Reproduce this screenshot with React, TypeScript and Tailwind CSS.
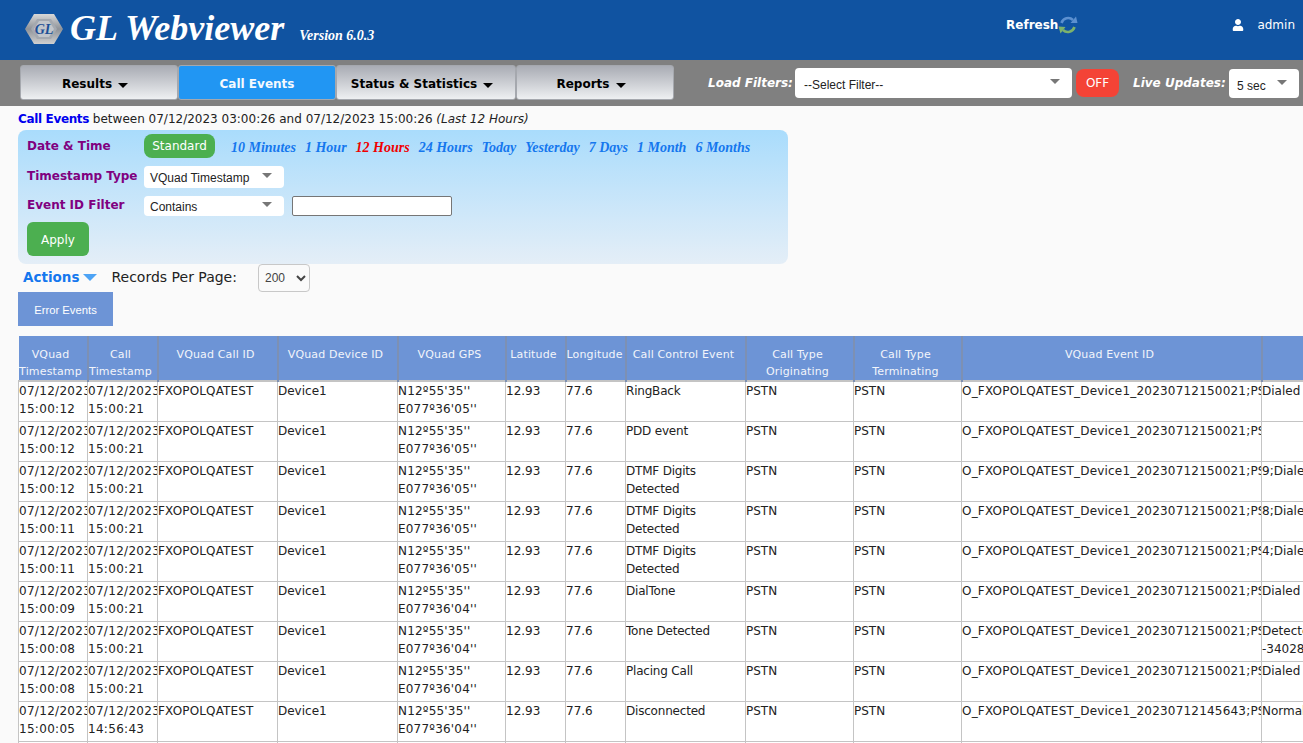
import { FaUser } from "react-icons/fa";

const cols = [69, 70, 120, 120, 108, 60, 60, 120, 108, 108, 300, 200];

const headers = [
  ["VQuad", "Timestamp"],
  ["Call", "Timestamp"],
  ["VQuad Call ID"],
  ["VQuad Device ID"],
  ["VQuad GPS"],
  ["Latitude"],
  ["Longitude"],
  ["Call Control Event"],
  ["Call Type", "Originating"],
  ["Call Type", "Terminating"],
  ["VQuad Event ID"],
  [""],
];

const rows = [
  { ts: "15:00:12", call: "15:00:21", lon: "E077º36'05''", ev: ["RingBack"], id: "20230712150021", last: ["Dialed"] },
  { ts: "15:00:12", call: "15:00:21", lon: "E077º36'05''", ev: ["PDD event"], id: "20230712150021", last: [""] },
  { ts: "15:00:12", call: "15:00:21", lon: "E077º36'05''", ev: ["DTMF Digits", "Detected"], id: "20230712150021", last: ["9;Dialed"] },
  { ts: "15:00:11", call: "15:00:21", lon: "E077º36'05''", ev: ["DTMF Digits", "Detected"], id: "20230712150021", last: ["8;Dialed"] },
  { ts: "15:00:11", call: "15:00:21", lon: "E077º36'05''", ev: ["DTMF Digits", "Detected"], id: "20230712150021", last: ["4;Dialed"] },
  { ts: "15:00:09", call: "15:00:21", lon: "E077º36'04''", ev: ["DialTone"], id: "20230712150021", last: ["Dialed"] },
  { ts: "15:00:08", call: "15:00:21", lon: "E077º36'04''", ev: ["Tone Detected"], id: "20230712150021", last: ["Detected", "-34028"] },
  { ts: "15:00:08", call: "15:00:21", lon: "E077º36'04''", ev: ["Placing Call"], id: "20230712150021", last: ["Dialed"] },
  { ts: "15:00:05", call: "14:56:43", lon: "E077º36'04''", ev: ["Disconnected"], id: "20230712145643", last: ["Normal"] },
  { ts: "15:00:05", call: "14:56:43", lon: "E077º36'04''", ev: ["Disconnected"], id: "20230712145643", last: ["Normal"] },
];

// digits in the source font run a bit wider than DejaVu
const cellTracking = [
  "tracking-[0.3px]",
  "tracking-[0.3px]",
  "tracking-[0.15px]",
  "",
  "tracking-[0.2px]",
  "",
  "",
  "tracking-[-0.2px]",
  "",
  "",
  "tracking-[0.2px]",
  "",
];

const ranges = ["10 Minutes", "1 Hour", "12 Hours", "24 Hours", "Today", "Yesterday", "7 Days", "1 Month", "6 Months"];

function Caret() {
  return <span className="inline-block ml-[6px] mt-[3px] border-x-[5px] border-t-[5px] border-x-transparent border-t-black" />;
}

function Tab({ label, active, width, caret = true }: { label: string; active?: boolean; width: string; caret?: boolean }) {
  return (
    <div
      className={`${width} shrink-0 h-[35px] flex items-center justify-center pt-[2px] rounded-[3px] text-[12px] font-bold border border-[#a5a8ae] ${
        caret ? "pr-[8px]" : ""
      } ${
        active
          ? "bg-[#2196f3] text-[#f4f9fe] border-[#2a8ad8]"
          : "bg-gradient-to-b from-[#a9acb4] to-[#eef0f2] text-black"
      }`}
    >
      {label}
      {caret && <Caret />}
    </div>
  );
}

function PickBox({ label, size, inset = "pl-[6px]", labelPad = "pt-[2px]" }: { label: string; size: string; inset?: string; labelPad?: string }) {
  return (
    <div className={`${size} ${inset} shrink-0 rounded-[4px] bg-white flex items-center justify-between pr-[12px] text-[12px] text-[#222] font-['Liberation_Sans',sans-serif]`}>
      <span className={labelPad}>{label}</span>
      <span className="mb-[3px] border-x-[5px] border-t-[5px] border-x-transparent border-t-[#777]" />
    </div>
  );
}

function Logo() {
  return (
    <svg width="40" height="32" viewBox="0 0 40 32" className="shrink-0">
      <defs>
        <linearGradient id="hex" x1="0" y1="0" x2="0" y2="1">
          <stop offset="0" stopColor="#d8d8d8" />
          <stop offset="0.5" stopColor="#8e9298" />
          <stop offset="1" stopColor="#d0d0d0" />
        </linearGradient>
      </defs>
      <polygon points="1,16 10,1 30,1 39,16 30,31 10,31" fill="url(#hex)" />
      <polygon points="7,16 13,6 27,6 33,16 27,26 13,26" fill="#a4a9b0" />
      <polygon points="10,16 15,8 25,8 30,16 25,24 15,24" fill="#c2c6cb" />
      <text x="20" y="21" textAnchor="middle" className="font-['Liberation_Serif',serif] font-bold italic text-[14px] fill-[#1c4f96]">
        GL
      </text>
    </svg>
  );
}

function RefreshIcon() {
  return (
    <svg width="20" height="20" viewBox="0 0 20 20" className="shrink-0" fill="none" strokeWidth="2.6">
      <path d="M3.5 8 A7 7 0 0 1 15 5" stroke="#5c90d0" />
      <polygon points="12.5,8 19.5,8 18,1.5" fill="#5c90d0" />
      <path d="M16.5 12 A7 7 0 0 1 5 15" stroke="#7cb26c" />
      <polygon points="0.5,11.5 7.5,12 2.5,18.5" fill="#7cb26c" />
    </svg>
  );
}

export default function App() {
  return (
    <div className="h-[743px] w-[1303px] overflow-hidden bg-[#fafafa] font-['DejaVu_Sans',Verdana,sans-serif] text-[#222]">
      <header className="h-[60px] bg-[#1053a1] flex items-start text-white">
        <div className="flex items-center ml-[24px] mt-[12px]">
          <Logo />
          <span className="ml-[6px] mb-[2px] font-['Liberation_Serif',serif] font-bold italic text-[36px] leading-[32px]">GL Webviewer</span>
          <span className="ml-[15px] mt-[12px] font-['Liberation_Serif',serif] font-bold italic text-[14px]">Version 6.0.3</span>
        </div>
        <div className="ml-auto flex items-center mt-[15px] mr-[154px] text-[12px] font-bold">
          Refresh
          <RefreshIcon />
        </div>
        <div className="flex items-center mt-[16px] mr-[8px] text-[12px]">
          <FaUser className="w-[12px] h-[12px] mr-[13px]" />
          admin
        </div>
      </header>

      <nav className="h-[46px] bg-[#808080] flex items-start pl-[20px] pt-[5px]">
        <Tab label="Results" width="w-[158px]" />
        <Tab label="Call Events" active width="w-[158px]" caret={false} />
        <Tab label="Status & Statistics" width="w-[180px]" />
        <Tab label="Reports" width="w-[158px]" />
        <span className="ml-[34px] w-[87px] shrink-0 mt-[10px] text-[12px] font-bold italic text-white leading-[16px] whitespace-nowrap">Load Filters:</span>
        <div className="mt-[3px]">
          <PickBox label="--Select Filter--" size="w-[277px] h-[30px]" inset="pl-[9px]" labelPad="pt-[4px]" />
        </div>
        <div className="ml-[4px] mt-[4px] w-[43px] h-[28px] shrink-0 rounded-[8px] bg-[#f44336] text-white text-[12px] flex items-center justify-center">OFF</div>
        <span className="ml-[14px] w-[96px] shrink-0 mt-[10px] text-[12px] font-bold italic text-white leading-[16px] whitespace-nowrap">Live Updates:</span>
        <div className="mt-[4px]">
          <PickBox label="5 sec" size="w-[70px] h-[29px]" inset="pl-[8px]" labelPad="pt-[4px]" />
        </div>
      </nav>

      <main className="pl-[18px]">
        <p className="h-[24px] pt-[4px] text-[12px] leading-[18px]">
          <b className="text-[#0000ee] tracking-[-0.35px]">Call Events</b> between 07/12/2023 03:00:26 and 07/12/2023 15:00:26 <i>(Last 12 Hours)</i>
        </p>

        <section className="w-[770px] h-[134px] rounded-[8px] bg-gradient-to-b from-[#a9dcfc] to-[#e4eef7] pl-[9px] pt-[4px]">
          <div className="flex items-start h-[32px]">
            <span className="w-[117px] pt-[3px] text-[12px] font-bold text-[#800080]">Date & Time</span>
            <span className="w-[71px] h-[24px] rounded-[8px] bg-[#4caf50] text-white text-[12px] flex items-center justify-center">Standard</span>
            <div className="ml-[16px] flex gap-[9px] pt-[5px] font-['Liberation_Serif',serif] italic text-[14px] leading-[18px] font-bold text-[#1577ee]">
              {ranges.map((r) => (
                <span key={r} className={r === "12 Hours" ? "text-[#f00000]" : ""}>
                  {r}
                </span>
              ))}
            </div>
          </div>
          <div className="flex items-center h-[22px]">
            <span className="w-[117px] pb-[2px] text-[12px] font-bold text-[#800080]">Timestamp Type</span>
            <PickBox label="VQuad Timestamp" size="w-[140px] h-[22px]" />
          </div>
          <div className="flex items-center h-[20px] mt-[8px]">
            <span className="w-[117px] pb-[2px] text-[12px] font-bold text-[#800080]">Event ID Filter</span>
            <PickBox label="Contains" size="w-[140px] h-[20px]" />
            <input className="ml-[8px] w-[160px] h-[20px] bg-white border border-[#767676] rounded-[2px]" />
          </div>
          <button className="mt-[6px] w-[62px] h-[34px] pt-[2px] rounded-[6px] bg-[#4caf50] text-white text-[12px]">Apply</button>
        </section>

        <div className="h-[28px] flex items-center">
          <span className="ml-[5px] mb-[2px] text-[13.5px] font-bold text-[#1577ee]">Actions</span>
          <span className="ml-[4px] mb-[2px] border-x-[7px] border-t-[7px] border-x-transparent border-t-[#4da3f5]" />
          <span className="ml-[14px] mb-[2px] text-[14px]">Records Per Page:</span>
          <select className="ml-[21px] w-[52px] h-[28px] text-[12px] pl-[2px] bg-[#fafafa] border border-[#c8c8c8] rounded-[4px] text-[#444] font-['Liberation_Sans',sans-serif]">
            <option>200</option>
          </select>
        </div>

        <button className="block w-[95px] h-[34px] pt-[3px] bg-[#6d94d6] text-white text-[11.25px] font-['Liberation_Sans',sans-serif]">Error Events</button>

        <table className="mt-[10px] table-fixed border-collapse w-[1443px] text-[12px] leading-[18px]">
          <colgroup>
            {cols.map((w, i) => (
              <col key={i} style={{ width: w }} />
            ))}
          </colgroup>
          <thead>
            <tr className="h-[44px] bg-[#6d94d6] text-[#f2f5fb] border-b-[2px] border-[#c4c4c4]">
              {headers.map((h, i) => (
                <th key={i} className="font-normal text-[11px] tracking-[0.15px] leading-[17px] align-top pt-[10px] pr-[4px] overflow-hidden border-r-[2px] border-[#7d90b3] whitespace-nowrap">
                  {h.map((line) => (
                    <div key={line}>{line}</div>
                  ))}
                </th>
              ))}
            </tr>
          </thead>
          <tbody className="bg-white">
            {rows.map((r, i) => (
              <tr key={i} className="h-[40px] align-top">
                {[
                  ["07/12/2023", r.ts],
                  ["07/12/2023", r.call],
                  ["FXOPOLQATEST"],
                  ["Device1"],
                  ["N12º55'35''", r.lon],
                  ["12.93"],
                  ["77.6"],
                  r.ev,
                  ["PSTN"],
                  ["PSTN"],
                  [`O_FXOPOLQATEST_Device1_${r.id};PSTN`],
                  r.last,
                ].map((lines, j) => (
                  <td key={j} className={`${cellTracking[j]} p-0 border border-[#c4c4c4] overflow-hidden whitespace-nowrap`}>
                    {lines.map((line, k) => (
                      <div key={k}>{line}</div>
                    ))}
                  </td>
                ))}
              </tr>
            ))}
          </tbody>
        </table>
      </main>
    </div>
  );
}
